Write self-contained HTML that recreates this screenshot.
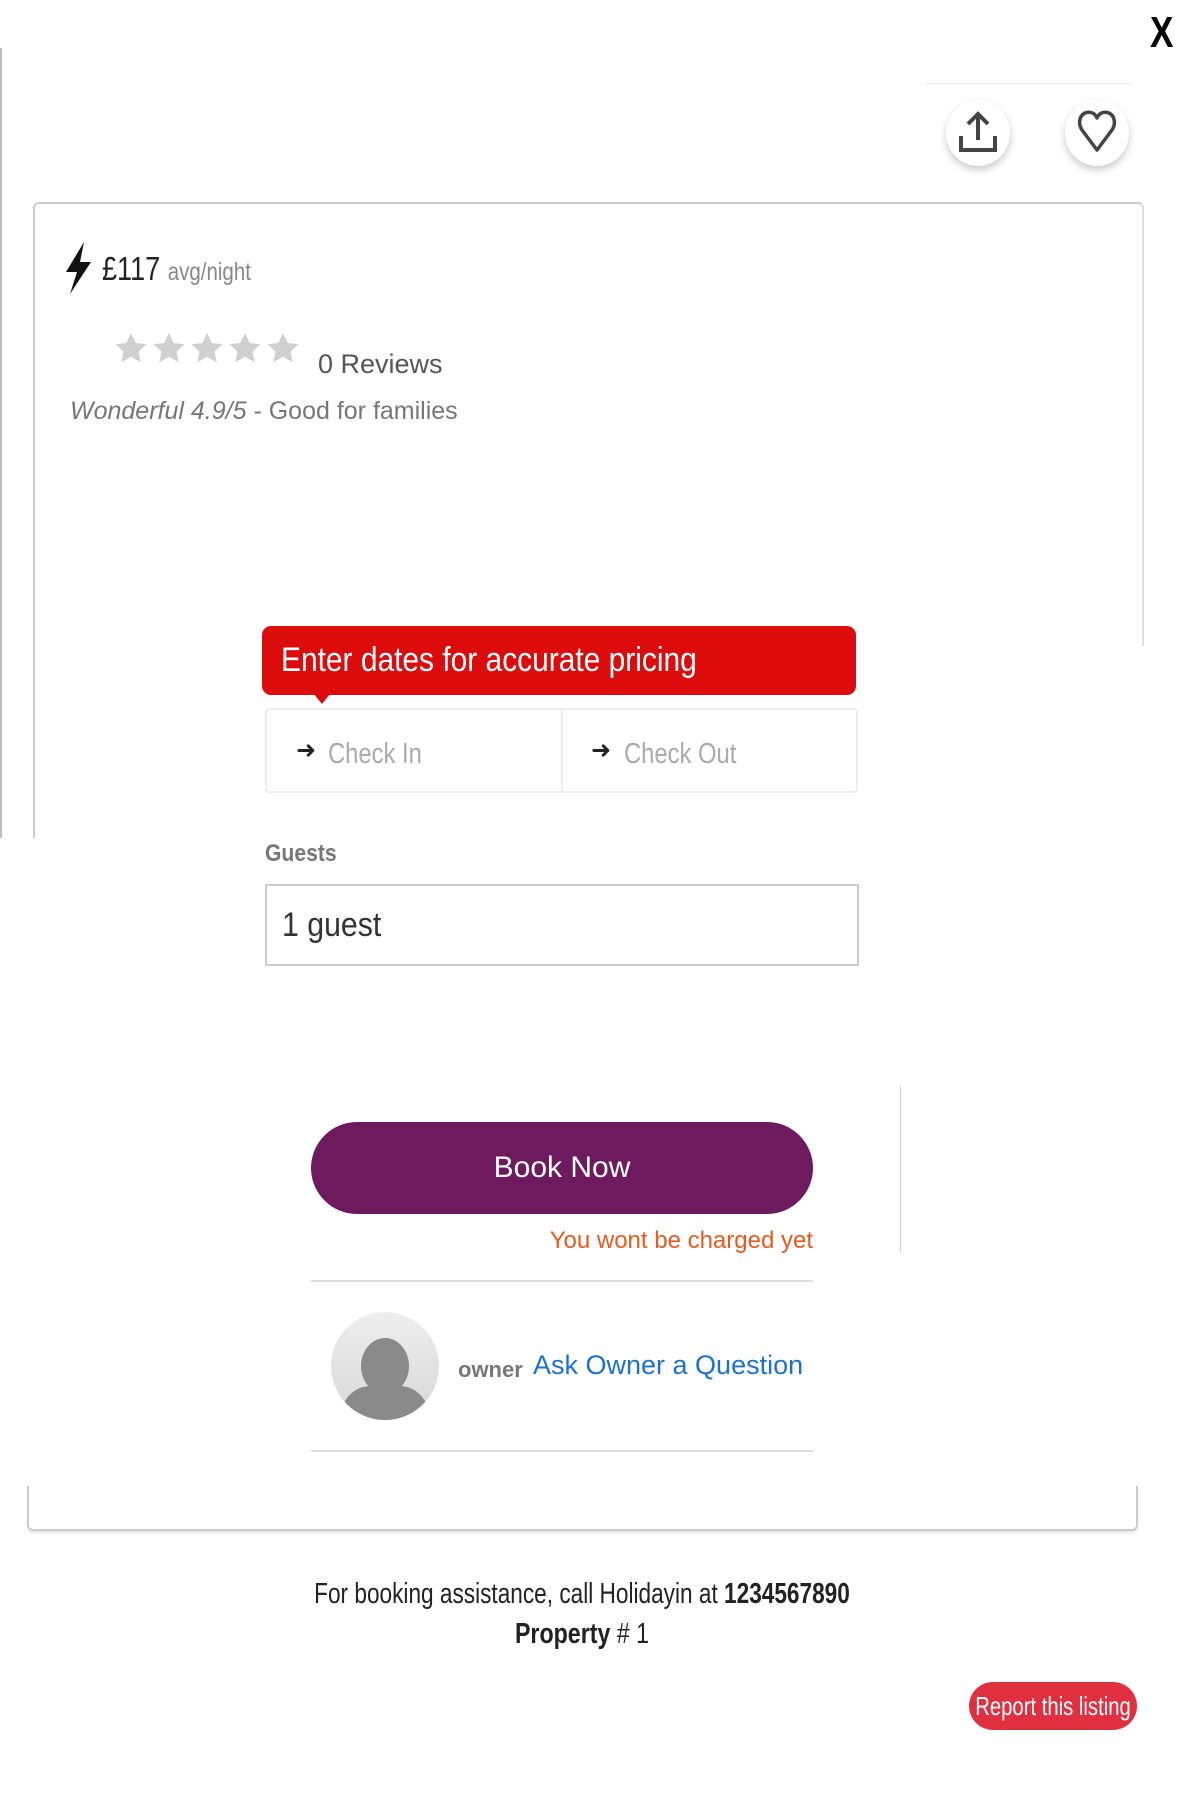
<!DOCTYPE html>
<html><head><meta charset="utf-8"><style>
*{margin:0;padding:0;box-sizing:border-box}
body{width:1200px;height:1811px;background:#fff;position:relative;overflow:hidden;font-family:"Liberation Sans",sans-serif;}
.a{position:absolute;white-space:nowrap}
.c{display:inline-block;transform-origin:left center}
</style></head><body>
<div class="a" style="left:1150px;top:8px;font-size:44px;font-weight:bold;color:#000"><span class="c" style="transform:scaleX(.8)">X</span></div>
<div class="a" style="left:0;top:48px;width:2px;height:790px;background:#bbb"></div>
<div class="a" style="left:926px;top:83px;width:205px;height:1px;background:#e8e8e8"></div>
<div class="a" style="left:946px;top:100px;width:64px;height:66px;border-radius:50%;background:#fff;box-shadow:0 4px 8px rgba(0,0,0,.2)"></div>
<svg class="a" style="left:956px;top:108px" width="44" height="48" viewBox="0 0 44 48"><path d="M22 32V6M12 16L22 6 32 16M5 28v14h34V28" fill="none" stroke="#444" stroke-width="4"/></svg>
<div class="a" style="left:1065px;top:100px;width:64px;height:66px;border-radius:50%;background:#fff;box-shadow:0 4px 8px rgba(0,0,0,.2)"></div>
<svg class="a" style="left:1077px;top:108px" width="40" height="46" viewBox="0 0 40 46"><path d="M20 42L5 22C1 16 2 8 8 5c5-2 10 0 12 5 2-5 7-7 12-5 6 3 7 11 3 17z" fill="none" stroke="#444" stroke-width="3.5" stroke-linejoin="round"/></svg>
<div class="a" style="left:33px;top:202px;width:1111px;height:636px;border:2px solid #ccc;border-bottom:none;border-right-color:#ddd;border-radius:6px 6px 0 0"></div>
<div class="a" style="left:1142px;top:646px;width:6px;height:200px;background:#fff"></div>
<svg class="a" style="left:62px;top:240px" width="32" height="56" viewBox="0 0 32 56"><path d="M22 2L4 32h11L8 54 29 22H18z" fill="#111"/></svg>
<div class="a" style="left:102px;top:250px;font-size:33px;color:#222"><span class="c" style="transform:scaleX(.82)">£117 <span style="font-size:25px;color:#888">avg/night</span></span></div>
<svg class="a" style="left:115px;top:332px" width="192" height="34" viewBox="0 0 192 34">
<g fill="#d0d0d0"><path id="s" d="M16 1l4.7 10 10.8 1.2-8 7.4 2.2 10.7L16 24.9 6.3 30.3l2.2-10.7-8-7.4L11.3 11z"/><use href="#s" x="38"/><use href="#s" x="76"/><use href="#s" x="114"/><use href="#s" x="152"/></g></svg>
<div class="a" style="left:318px;top:349px;font-size:27px;color:#555">0 Reviews</div>
<div class="a" style="left:70px;top:397px;font-size:25px;color:#777"><i>Wonderful 4.9/5</i> - Good for families</div>
<div class="a" style="left:262px;top:626px;width:594px;height:69px;background:#dc0c0c;border-radius:9px;color:#fff;font-size:34px;padding:15px 0 0 19px"><span class="c" style="transform:scaleX(.88)">Enter dates for accurate pricing</span></div>
<div class="a" style="left:314px;top:694px;width:0;height:0;border-left:8px solid transparent;border-right:8px solid transparent;border-top:10px solid #dc0c0c"></div>
<div class="a" style="left:265px;top:708px;width:593px;height:85px;border:2px solid #eee;border-radius:4px"></div>
<div class="a" style="left:561px;top:708px;width:2px;height:85px;background:#eee"></div>
<div class="a" style="left:296px;top:736px;font-size:24px;color:#222">➜</div>
<div class="a" style="left:328px;top:738px;font-size:29px;color:#aaa"><span class="c" style="transform:scaleX(.82)">Check In</span></div>
<div class="a" style="left:591px;top:736px;font-size:24px;color:#222">➜</div>
<div class="a" style="left:624px;top:738px;font-size:29px;color:#aaa"><span class="c" style="transform:scaleX(.82)">Check Out</span></div>
<div class="a" style="left:265px;top:840px;font-size:24px;color:#777;font-weight:bold"><span class="c" style="transform:scaleX(.88)">Guests</span></div>
<div class="a" style="left:265px;top:884px;width:594px;height:82px;border:2px solid #ccc;font-size:34px;color:#333;padding:20px 0 0 15px"><span class="c" style="transform:scaleX(.89)">1 guest</span></div>
<div class="a" style="left:900px;top:1086px;width:1px;height:166px;background:#ccc"></div>
<div class="a" style="left:311px;top:1122px;width:502px;height:92px;background:#6d1a5e;border-radius:46px;color:#fff;font-size:30px;text-align:center;line-height:92px">Book Now</div>
<div class="a" style="left:513px;top:1227px;width:300px;text-align:right;font-size:24px;color:#ea5a1e">You wont be charged yet</div>
<div class="a" style="left:311px;top:1280px;width:502px;height:2px;background:#ddd"></div>
<div class="a" style="left:331px;top:1312px;width:108px;height:108px;border-radius:50%;background:linear-gradient(#eee,#d8d8d8);overflow:hidden">
<div style="position:absolute;left:30px;top:26px;width:48px;height:56px;border-radius:50%;background:#8a8a8a"></div>
<div style="position:absolute;left:10px;top:74px;width:88px;height:60px;border-radius:30px 30px 0 0;background:#8a8a8a"></div></div>
<div class="a" style="left:458px;top:1357px;font-size:22px;color:#777;font-weight:bold">owner</div>
<div class="a" style="left:533px;top:1350px;font-size:27px;color:#1c72d0">Ask Owner a Question</div>
<div class="a" style="left:311px;top:1450px;width:502px;height:2px;background:#ddd"></div>
<div class="a" style="left:27px;top:1486px;width:1111px;height:45px;border:2px solid #ccc;border-top:none;border-radius:0 0 6px 6px;box-shadow:0 2px 2px rgba(0,0,0,.1)"></div>
<div class="a" style="left:582px;top:1578px;font-size:29px;color:#222;transform:translateX(-50%) scaleX(.78)">For booking assistance, call Holidayin at <b>1234567890</b></div>
<div class="a" style="left:582px;top:1618px;font-size:29px;color:#222;transform:translateX(-50%) scaleX(.8)"><b>Property</b> # 1</div>
<div class="a" style="left:969px;top:1682px;width:168px;height:48px;background:#e0303f;border-radius:24px"></div>
<div class="a" style="left:1053px;top:1682px;line-height:48px;font-size:26px;color:#fff;transform:translateX(-50%) scaleX(.78)">Report this listing</div>
</body></html>
